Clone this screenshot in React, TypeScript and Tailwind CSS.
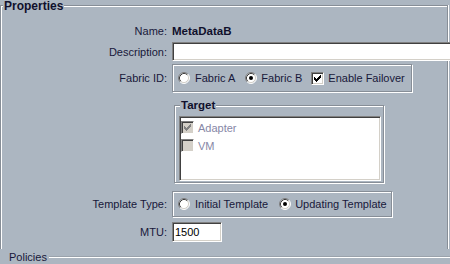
import React from "react";

const Radio = ({ checked }: { checked?: boolean }) => (
  <svg width="12" height="12" viewBox="0 0 12 12" className="shrink-0">
    <circle cx="6" cy="6" r="5" fill="#ffffff" />
    <path d="M2.11 9.89A5.5 5.5 0 0 1 9.89 2.11" fill="none" stroke="#808080" strokeWidth="1" />
    <path d="M9.89 2.11A5.5 5.5 0 0 1 2.11 9.89" fill="none" stroke="#ffffff" strokeWidth="1" />
    <path d="M2.82 9.18A4.5 4.5 0 0 1 9.18 2.82" fill="none" stroke="#404040" strokeWidth="1" />
    <path d="M9.18 2.82A4.5 4.5 0 0 1 2.82 9.18" fill="none" stroke="#d4d0c8" strokeWidth="1" />
    {checked && <circle cx="6" cy="6" r="2" fill="#000000" />}
  </svg>
);

const CheckMark = ({ color }: { color: string }) => (
  <svg width="7" height="7" viewBox="0 0 7 7" shapeRendering="crispEdges">
    <rect x="0" y="2" width="1" height="3" fill={color} />
    <rect x="1" y="3" width="1" height="3" fill={color} />
    <rect x="2" y="4" width="1" height="3" fill={color} />
    <rect x="3" y="3" width="1" height="3" fill={color} />
    <rect x="4" y="2" width="1" height="3" fill={color} />
    <rect x="5" y="1" width="1" height="3" fill={color} />
    <rect x="6" y="0" width="1" height="3" fill={color} />
  </svg>
);

const Checkbox = ({ checked, disabled }: { checked?: boolean; disabled?: boolean }) => (
  <span
    className={
      "w-[13px] h-[13px] shrink-0 flex items-center justify-center border border-t-[#808080] border-l-[#808080] border-b-white border-r-white shadow-[inset_1px_1px_0_#404040,inset_-1px_-1px_0_#d4d0c8] " +
      (disabled ? "bg-[#d4d0c8]" : "bg-white")
    }
  >
    {checked && <CheckMark color={disabled ? "#808080" : "#000000"} />}
  </span>
);

const Label = ({ children }: { children?: React.ReactNode }) => (
  <div className="w-[166px] shrink-0 text-right">{children}</div>
);

export default function App() {
  return (
    <div className="w-[450px] h-[264px] overflow-hidden bg-[#acb6c1] font-['Liberation_Sans',Arial,sans-serif] text-[11px] leading-[14px] text-[#18183a]">
      <div className="mt-[5px] w-[448px] h-[244px] flex flex-col border-l border-t border-r border-[#878e97] shadow-[inset_1px_1px_0_#ffffff,1px_0_0_#ffffff]">
        <div className="-mt-[6px] ml-[2px] w-fit px-[1px] bg-[#acb6c1] font-bold text-[12px] leading-[12px] text-[#10102c]">
          Properties
        </div>

        <div className="mt-[10px] flex h-[18px] items-center">
          <Label>Name:</Label>
          <div className="ml-[5px] font-bold text-[11.5px] text-[#10102c]">MetaDataB</div>
        </div>

        <div className="mt-[2px] flex h-[19px] items-center">
          <Label>Description:</Label>
          <div className="ml-[5px] w-[280px] h-[19px] shrink-0 bg-white border border-t-[#808080] border-l-[#808080] border-b-white border-r-white shadow-[inset_1px_1px_0_#404040,inset_-1px_-1px_0_#d4d0c8]" />
        </div>

        <div className="mt-[3px] flex h-[28px] items-center">
          <Label>Fabric ID:</Label>
          <div className="ml-[5px] h-[28px] flex items-center pl-[5px] pr-[6px] border border-[#878e97] shadow-[inset_1px_1px_0_#ffffff,1px_1px_0_#ffffff]">
            <Radio />
            <span className="ml-[5px]">Fabric A</span>
            <span className="ml-[10px]"><Radio checked /></span>
            <span className="ml-[4px]">Fabric B</span>
            <span className="ml-[9px]"><Checkbox checked /></span>
            <span className="ml-[4px]">Enable Failover</span>
          </div>
        </div>

        <div className="mt-[13px] flex">
          <Label />
          <div className="ml-[7px] w-[210px] h-[78px] flex flex-col border border-[#878e97] shadow-[inset_1px_1px_0_#ffffff,1px_1px_0_#ffffff]">
            <div className="-mt-[7px] ml-[5px] w-fit px-[1px] bg-[#acb6c1] font-bold text-[11.5px] leading-[12px] text-[#10102c]">
              Target
            </div>
            <div className="mt-[5px] ml-[4px] w-[202px] h-[65px] bg-white border border-t-[#808080] border-l-[#808080] border-b-white border-r-white shadow-[inset_1px_1px_0_#404040,inset_-1px_-1px_0_#d4d0c8] pt-[4px] pl-[1px] flex flex-col gap-[5px] text-[#8787a6]">
              <div className="flex h-[13px] items-center">
                <Checkbox checked disabled />
                <span className="ml-[4px]">Adapter</span>
              </div>
              <div className="flex h-[13px] items-center">
                <Checkbox disabled />
                <span className="ml-[4px]">VM</span>
              </div>
            </div>
          </div>
        </div>

        <div className="mt-[8px] flex h-[26px] items-center">
          <Label>Template Type:</Label>
          <div className="ml-[5px] h-[26px] flex items-center pl-[5px] pr-[4px] border border-[#878e97] shadow-[inset_1px_1px_0_#ffffff,1px_1px_0_#ffffff]">
            <Radio />
            <span className="ml-[5px]">Initial Template</span>
            <span className="ml-[11px]"><Radio checked /></span>
            <span className="ml-[4px]">Updating Template</span>
          </div>
        </div>

        <div className="mt-[5px] flex h-[20px] items-center">
          <Label>MTU:</Label>
          <div className="ml-[5px] w-[50px] h-[20px] shrink-0 bg-white border border-t-[#808080] border-l-[#808080] border-b-white border-r-white shadow-[inset_1px_1px_0_#404040,inset_-1px_-1px_0_#d4d0c8] pl-[2px] flex items-center text-black">
            1500
          </div>
        </div>
      </div>

      <div className="flex h-[15px] items-center pl-[9px]">
        <span>Policies</span>
        <div className="ml-[2px] flex-1 h-[2px] border-t border-t-[#9aa2ab] border-b border-b-white" />
      </div>
    </div>
  );
}
